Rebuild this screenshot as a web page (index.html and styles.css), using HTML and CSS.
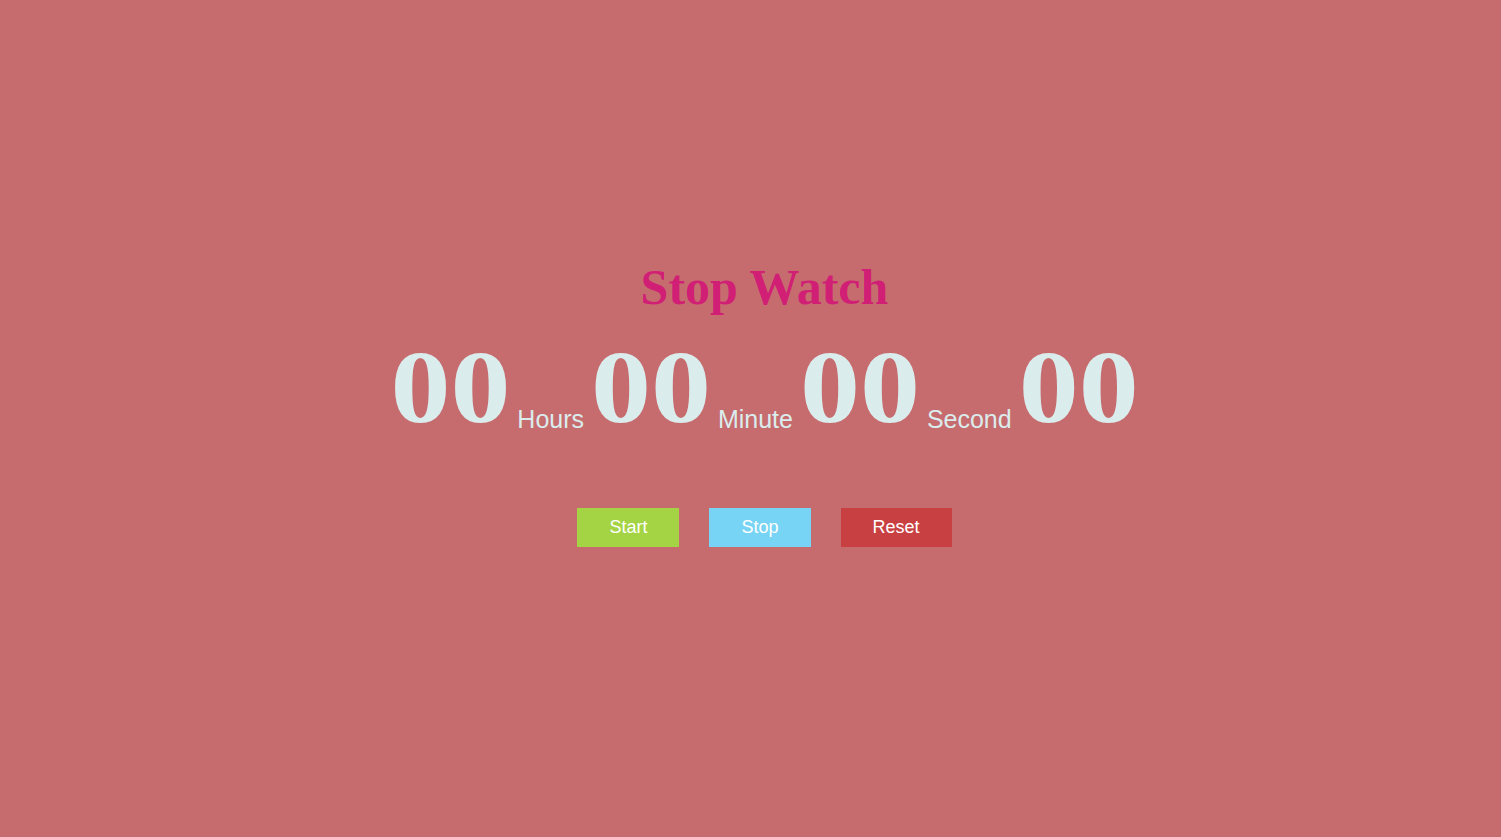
FILE: index.html
```html
<!DOCTYPE html>
<html>
<head>
<meta charset="utf-8">
<title>Stop Watch</title>
<link rel="stylesheet" href="styles.css">
</head>
<body>
<main class="page">
  <div class="watch">
    <h1 class="title">Stop Watch</h1>
    <div class="time">
      <span class="digits">00</span> <span class="unit">Hours</span> <span class="digits">00</span> <span class="unit">Minute</span> <span class="digits">00</span> <span class="unit">Second</span> <span class="digits">00</span>
    </div>
    <div class="buttons">
      <button class="btn btn-start">Start</button>
      <button class="btn btn-stop">Stop</button>
      <button class="btn btn-reset">Reset</button>
    </div>
  </div>
</main>
</body>
</html>
```
FILE: styles.css
```css
html, body {
  margin: 0;
  padding: 0;
  height: 100%;
}
body {
  background: #c66b6e;
  font-family: "Liberation Sans", Arial, sans-serif;
}
.page {
  height: 100%;
  display: flex;
  align-items: center;
  justify-content: center;
  padding-left: 28px;
  padding-bottom: 32px;
  box-sizing: border-box;
}
.watch {
  display: flex;
  flex-direction: column;
  align-items: center;
}
.title {
  margin: 0;
  font-family: "Liberation Serif", "Times New Roman", serif;
  font-weight: bold;
  font-size: 50px;
  line-height: 58px;
  color: #d11f76;
}
.time {
  margin-top: 12px;
  white-space: nowrap;
  color: #dbecec;
  line-height: 1;
  font-size: 25px;
}
.digits {
  font-family: "Liberation Serif", "Times New Roman", serif;
  font-weight: bold;
  font-size: 120px;
  display: inline-block;
  transform: translateY(-6px) scaleY(0.86);
  transform-origin: 50% 84%;
}
.unit {
  font-size: 25px;
}
.buttons {
  display: flex;
  gap: 30px;
  margin-top: 60px;
}
.btn {
  border: none;
  margin: 0;
  height: 39px;
  padding: 0 32px;
  font-family: "Liberation Sans", Arial, sans-serif;
  font-size: 18px;
  color: #fff;
  cursor: pointer;
}
.btn-start { background: #a4d344; }
.btn-stop { background: #78d4f4; }
.btn-reset { background: #c94042; }
```
